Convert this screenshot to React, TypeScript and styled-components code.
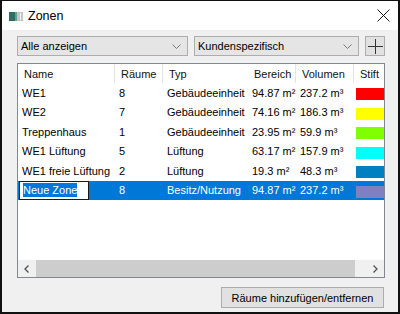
import styled, { createGlobalStyle } from "styled-components";

const GlobalStyle = createGlobalStyle`
  html, body {
    margin: 0;
    padding: 0;
    background: #ffffff;
  }
  body {
    font-family: "Liberation Sans", Arial, sans-serif;
    font-size: 11px;
    color: #000;
  }
`;

interface Zone {
  name: string;
  rooms: number;
  type: string;
  area: string;
  volume: string;
  pen: string;
}

const zones: Zone[] = [
  { name: "WE1", rooms: 8, type: "Gebäudeeinheit", area: "94.87 m²", volume: "237.2 m³", pen: "#ff0000" },
  { name: "WE2", rooms: 7, type: "Gebäudeeinheit", area: "74.16 m²", volume: "186.3 m³", pen: "#ffff00" },
  { name: "Treppenhaus", rooms: 1, type: "Gebäudeeinheit", area: "23.95 m²", volume: "59.9 m³", pen: "#80ff00" },
  { name: "WE1 Lüftung", rooms: 5, type: "Lüftung", area: "63.17 m²", volume: "157.9 m³", pen: "#00ffff" },
  { name: "WE1 freie Lüftung", rooms: 2, type: "Lüftung", area: "19.3 m²", volume: "48.3 m³", pen: "#0080c0" },
  { name: "Neue Zone", rooms: 8, type: "Besitz/Nutzung", area: "94.87 m²", volume: "237.2 m³", pen: "#8080c0" },
];

const columns = ["Name", "Räume", "Typ", "Bereich", "Volumen", "Stift"];

function App() {
  const selected = 5;

  return (
    <>
      <GlobalStyle />
      <Window>
        <TitleBar>
          <TitleIcon width="14" height="9" viewBox="0 0 14 9">
            <rect x="0" y="0" width="6" height="9" fill="#2f6e60" />
            <rect x="6" y="0" width="2" height="9" fill="#5fa595" />
            <rect x="8" y="0" width="6" height="9" fill="#c6c6c6" />
            <rect x="11" y="1" width="1" height="7" fill="#f4f4f4" />
          </TitleIcon>
          <Title>Zonen</Title>
          <CloseBtn width="13" height="13" viewBox="0 0 13 13">
            <path d="M0.5 0.5 L12.5 12.5 M12.5 0.5 L0.5 12.5" stroke="#1a1a1a" strokeWidth="1" />
          </CloseBtn>
        </TitleBar>

        <Body>
          <FilterRow>
            <Combo>
              <span>Alle anzeigen</span>
              <Chevron />
            </Combo>
            <Combo>
              <span>Kundenspezifisch</span>
              <Chevron />
            </Combo>
            <SquareButton>
              <svg width="15" height="15" viewBox="0 0 15 15">
                <path d="M7.5 0 V15 M0 7.5 H15" stroke="#333" strokeWidth="1" />
              </svg>
            </SquareButton>
          </FilterRow>

          <ListView>
            <ListContent>
              <HeaderRow>
                {columns.map((c) => (
                  <HeaderCell key={c}>{c}</HeaderCell>
                ))}
              </HeaderRow>
              {zones.map((z, i) => (
                <Row key={z.name} $selected={i === selected}>
                  <Cell>
                    {i === selected ? (
                      <EditBox>
                        <Highlight>{z.name}</Highlight>
                      </EditBox>
                    ) : (
                      z.name
                    )}
                  </Cell>
                  <Cell>{z.rooms}</Cell>
                  <Cell>{z.type}</Cell>
                  <Cell>{z.area}</Cell>
                  <Cell>{z.volume}</Cell>
                  <Cell>
                    <Swatch $color={z.pen} />
                  </Cell>
                </Row>
              ))}
            </ListContent>
            <HScroll>
              <ScrollArrow>
                <svg width="5" height="8" viewBox="0 0 5 8">
                  <path d="M4.5 0.5 L1 4 L4.5 7.5" stroke="#505050" strokeWidth="1.3" fill="none" />
                </svg>
              </ScrollArrow>
              <Track>
                <Thumb />
              </Track>
              <ScrollArrow>
                <svg width="5" height="8" viewBox="0 0 5 8">
                  <path d="M0.5 0.5 L4 4 L0.5 7.5" stroke="#505050" strokeWidth="1.3" fill="none" />
                </svg>
              </ScrollArrow>
            </HScroll>
          </ListView>

          <Footer>
            <PushButton>Räume hinzufügen/entfernen</PushButton>
          </Footer>
        </Body>
      </Window>
    </>
  );
}

const Chevron = () => (
  <svg width="9" height="5" viewBox="0 0 9 5">
    <path d="M0.5 0.5 L4.5 4.5 L8.5 0.5" stroke="#7a7a7a" strokeWidth="1" fill="none" />
  </svg>
);

export default App;

interface RowProps {
  $selected?: boolean;
}

interface SwatchProps {
  $color: string;
}

const Window = styled.div`
  width: 400px;
  height: 314px;
  box-sizing: border-box;
  border: 2px solid #111;
  border-top-width: 1px;
  display: flex;
  flex-direction: column;
  background: #f0f0f0;
  overflow: hidden;
`;

const TitleBar = styled.div`
  height: 29px;
  flex-shrink: 0;
  background: #ffffff;
  display: flex;
  align-items: center;
  padding: 0 8px 0 7px;
`;

const TitleIcon = styled.svg`
  margin-top: 1px;
`;

const Title = styled.div`
  margin-left: 5px;
  font-size: 12.5px;
  color: #000;
  flex: 1;
`;

const CloseBtn = styled.svg`
  margin-right: 0px;
`;

const Body = styled.div`
  flex: 1;
  display: flex;
  flex-direction: column;
  padding: 6px 13px 4px 15px;
`;

const FilterRow = styled.div`
  display: grid;
  grid-template-columns: 171px 165px 20px;
  gap: 6px;
  height: 20px;
`;

const Combo = styled.div`
  box-sizing: border-box;
  border: 1px solid #adadad;
  background: #e5e5e5;
  display: flex;
  align-items: center;
  justify-content: space-between;
  padding: 0 6px 0 3px;
  font-size: 11px;
`;

const SquareButton = styled.div`
  box-sizing: border-box;
  border: 1px solid #adadad;
  background: #e1e1e1;
  display: flex;
  align-items: center;
  justify-content: center;
`;

const ListView = styled.div`
  margin-top: 7px;
  height: 215px;
  box-sizing: border-box;
  border: 1px solid #828790;
  background: #ffffff;
  display: flex;
  flex-direction: column;
  overflow: hidden;
`;

const ListContent = styled.div`
  flex: 1;
  overflow: hidden;
`;

const gridCols = "97px 48px 85px 48px 58px 50px";

const HeaderRow = styled.div`
  display: grid;
  grid-template-columns: ${gridCols};
  height: 19px;
`;

const HeaderCell = styled.div`
  display: flex;
  align-items: center;
  padding-left: 6px;
  border-right: 1px solid #e5e5e5;
  color: #111;
  white-space: nowrap;
  overflow: hidden;
  &:nth-child(3) {
    border-right-color: transparent;
  }
`;

const Row = styled.div<RowProps>`
  display: grid;
  grid-template-columns: ${gridCols};
  height: 19.5px;
  background: ${(p) => (p.$selected ? "#0078d7" : "transparent")};
  color: ${(p) => (p.$selected ? "#ffffff" : "#000000")};
`;

const Cell = styled.div`
  display: flex;
  align-items: center;
  padding-left: 4px;
  white-space: nowrap;
  overflow: hidden;
  &:first-child {
    padding-left: 4px;
  }
  &:last-child {
    padding-left: 2px;
    align-items: flex-start;
    padding-top: 5px;
  }
`;

const EditBox = styled.div`
  margin-left: -3px;
  width: 70px;
  height: 19px;
  box-sizing: border-box;
  border: 1px solid #1a1a1a;
  background: #ffffff;
  display: flex;
  align-items: center;
  padding-left: 3px;
`;

const Highlight = styled.span`
  background: #0078d7;
  color: #ffffff;
  line-height: 14px;
`;

const Swatch = styled.div<SwatchProps>`
  width: 30px;
  height: 12px;
  background: ${(p) => p.$color};
`;

const HScroll = styled.div`
  height: 17px;
  flex-shrink: 0;
  display: flex;
  background: #f0f0f0;
`;

const ScrollArrow = styled.div`
  width: 17px;
  display: flex;
  align-items: center;
  justify-content: center;
`;

const Track = styled.div`
  flex: 1;
  display: flex;
  padding: 0 12px 0 1px;
`;

const Thumb = styled.div`
  flex: 1;
  background: #cdcdcd;
`;

const Footer = styled.div`
  margin-top: 9px;
  display: flex;
  justify-content: flex-end;
  padding-right: 1px;
`;

const PushButton = styled.div`
  width: 163px;
  height: 21px;
  box-sizing: border-box;
  border: 1px solid #adadad;
  background: #e1e1e1;
  display: flex;
  align-items: center;
  justify-content: center;
  font-size: 11px;
  color: #000;
`;
